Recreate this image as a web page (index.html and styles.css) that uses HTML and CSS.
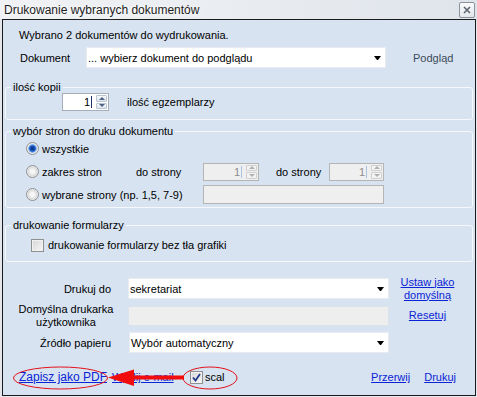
FILE: index.html
```html
<!DOCTYPE html>
<html lang="pl">
<head>
    <meta charset="UTF-8">
    <title>Drukowanie wybranych dokumentów</title>
    <link rel="stylesheet" href="styles.css">
</head>
<body>
    <div class="titlebar">
        <span class="title">Drukowanie wybranych dokumentów</span>
        <span class="close-btn">
            <svg width="8" height="8" viewBox="0 0 8 8"><path d="M1 1 L7 7 M7 1 L1 7" stroke="#5d6670" stroke-width="1.6"/></svg>
        </span>
    </div>

    <div class="window">
        <div class="intro">Wybrano 2 dokumentów do wydrukowania.</div>

        <div class="doc-row">
            <span class="doc-label">Dokument</span>
            <div class="select doc-select"><span>... wybierz dokument do podglądu</span><span class="arrow"></span></div>
            <span class="preview">Podgląd</span>
        </div>

        <!-- ilość kopii -->
        <fieldset class="group copies">
            <legend>ilość kopii</legend>
            <div class="copies-row">
                <div class="spin copies-spin">
                    <span class="spin-val">1</span><span class="caret"></span>
                    <span class="spin-btns"><span class="up"></span><span class="down"></span></span>
                </div>
                <span class="copies-label">ilość egzemplarzy</span>
            </div>
        </fieldset>

        <!-- zakres stron -->
        <fieldset class="group pages-group">
            <legend>wybór stron do druku dokumentu</legend>
            <div class="pages">
                <label class="option all-option"><span class="radio on"></span>wszystkie</label>

                <label class="option"><span class="radio"></span>zakres stron</label>
                <span>do strony</span>
                <div class="spin off">
                    <span class="spin-val">1</span><span class="caret"></span>
                    <span class="spin-btns"><span class="up"></span><span class="down"></span></span>
                </div>
                <span class="to-label">do strony</span>
                <div class="spin off">
                    <span class="spin-val">1</span><span class="caret"></span>
                    <span class="spin-btns"><span class="up"></span><span class="down"></span></span>
                </div>

                <label class="option pick-option"><span class="radio"></span>wybrane strony (np. 1,5, 7-9)</label>
                <div class="textbox off pick-input"></div>
            </div>
        </fieldset>

        <!-- formularze -->
        <fieldset class="group forms-group">
            <legend>drukowanie formularzy</legend>
            <label class="forms"><span class="check"></span>drukowanie formularzy bez tła grafiki</label>
        </fieldset>

        <!-- drukarka -->
        <div class="printer">
            <span class="label">Drukuj do</span>
            <div class="select"><span>sekretariat</span><span class="arrow"></span></div>
            <a href="#" class="link-cell">Ustaw jako<br>domyślną</a>

            <span class="label two-line">Domyślna drukarka<br>użytkownika</span>
            <div class="textbox default-box"></div>
            <a href="#" class="link-cell">Resetuj</a>

            <span class="label">Źródło papieru</span>
            <div class="select paper-select"><span>Wybór automatyczny</span><span class="arrow"></span></div>
        </div>

        <div class="actions">
            <a href="#" class="pdf">Zapisz jako PDF</a>
            <a href="#" class="mail">Wyślij e-mail</a>
            <span class="check on">
                <svg width="9" height="9" viewBox="0 0 9 9"><path d="M1 4.5 L3.5 7.5 L8 1" fill="none" stroke="#1f3a8a" stroke-width="1.8"/></svg>
            </span>
            <span class="scal">scal</span>
            <a href="#" class="abort">Przerwij</a>
            <a href="#" class="print">Drukuj</a>
        </div>
    </div>

    <!-- czerwone oznaczenia -->
    <svg class="marks" width="477" height="397" viewBox="0 0 477 397">
        <ellipse cx="60.5" cy="378" rx="47" ry="11" fill="none" stroke="#e3121b" stroke-width="1"/>
        <ellipse cx="210" cy="378" rx="27" ry="11" fill="none" stroke="#e3121b" stroke-width="1"/>
        <rect x="130" y="375.5" width="54" height="4" fill="#f20d0d"/>
        <polygon points="108,377.5 134,369.5 134,386" fill="#f20d0d"/>
    </svg>
</body>
</html>
```

FILE: styles.css
```css
* {
    box-sizing: border-box;
}
body {
    margin: 0;
    width: 477px;
    height: 397px;
    overflow: hidden;
    position: relative;
    background: #e3e7ec;
    font-family: "Liberation Sans", Arial, sans-serif;
    font-size: 11px;
    color: #000;
}

.titlebar {
    height: 19px;
    display: flex;
    align-items: center;
    justify-content: space-between;
    padding: 0 2px 0 4px;
    background: linear-gradient(to right, #f0f2f5 0%, #eaedf1 45%, #dfe4ea 100%);
}
.title {
    font-size: 12px;
    color: #1c1c1c;
    text-shadow: 0 0 6px #fff, 0 0 3px #fff;
}
.close-btn {
    width: 16px;
    height: 16px;
    border: 1px solid #8a929c;
    border-radius: 2px;
    background: linear-gradient(#fbfbfc, #e2e6ea);
    display: flex;
    align-items: center;
    justify-content: center;
}

.window {
    margin: 0 1px 0 2px;
    height: 377px;
    border: 1px solid #1b1b1b;
    background: #d7e3f0;
}

.intro {
    margin: 9px 0 0 16px;
    line-height: 13px;
}

.doc-row {
    display: flex;
    align-items: center;
    height: 21px;
    margin-top: 5px;
    padding-left: 17px;
}
.doc-label {
    width: 66px;
}
.preview {
    margin-left: 27px;
    color: #3c4a5a;
}

.select {
    display: flex;
    align-items: center;
    justify-content: space-between;
    height: 21px;
    padding: 0 4px 0 1px;
    background: #fff;
    border: 1px solid #e6ecf2;
}
.doc-select {
    width: 300px;
}
.arrow {
    width: 1px;
    height: 0;
    border-left: 3px solid transparent;
    border-right: 3px solid transparent;
    border-top: 4px solid #000;
    box-sizing: content-box;
}

/* group boxes */
.group {
    margin: 13px 2px 0;
    padding: 0;
    border: 1px solid #f6f9fc;
    border-radius: 3px;
    min-width: 0;
}
.group legend {
    margin-left: 5px;
    padding: 0 2px;
    line-height: 12px;
}
.pages-group {
    margin-top: 5px;
}
.forms-group {
    margin-top: 11px;
}

/* spinner */
.spin {
    display: flex;
    height: 18px;
    border: 1px solid #a6afb9;
    background: #fff;
}
.copies-spin {
    width: 47px;
}
.spin-val {
    flex: 1;
    text-align: right;
    line-height: 16px;
}
.caret {
    width: 1px;
    margin: 2px 4px 2px 1px;
    background: #27306e;
}
.spin-btns {
    width: 12px;
    display: flex;
    flex-direction: column;
    gap: 1px;
    padding: 1px 1px 1px 0;
}
.spin-btns span {
    flex: 1;
    display: flex;
    align-items: center;
    justify-content: center;
    border: 1px solid #b9c5d3;
    border-radius: 1px;
    background: linear-gradient(#f7f9fb, #dde5ee);
}
.spin-btns .up::after,
.spin-btns .down::after {
    content: "";
    border-left: 3px solid transparent;
    border-right: 3px solid transparent;
}
.spin-btns .up::after {
    border-bottom: 3px solid #4f6283;
}
.spin-btns .down::after {
    border-top: 3px solid #4f6283;
}
.spin.off {
    background: #efefef;
    border-color: #b5b5b5;
    color: #8d8d8d;
}
.spin.off .caret {
    background: #a9c3e0;
}
.spin.off .spin-btns span {
    border-color: #d0d0d0;
    background: #f3f3f3;
}
.spin.off .up::after {
    border-bottom-color: #b0b0b0;
}
.spin.off .down::after {
    border-top-color: #b0b0b0;
}

.copies-row {
    display: flex;
    align-items: center;
    padding: 0 0 8px 56px;
}
.copies-label {
    margin-left: 18px;
}

/* page range */
.pages {
    display: grid;
    grid-template-columns: 110px 67px 56px 70px 55px;
    grid-auto-rows: 23px;
    align-items: center;
    padding: 0 0 1px 20px;
}
.option {
    display: flex;
    align-items: center;
    gap: 3px;
}
.all-option {
    grid-column: 1 / -1;
}
.pick-option {
    grid-column: 1 / 3;
}
.pick-input {
    grid-column: 3 / 6;
    height: 19px;
}
.to-label {
    padding-left: 17px;
}

.radio {
    flex: none;
    width: 13px;
    height: 13px;
    border-radius: 50%;
    border: 1px solid #8d8f91;
    background: radial-gradient(circle, #f6f6f6 0 2px, #dadada 4.5px, #f4f4f4 5.5px);
}
.radio.on {
    background: radial-gradient(circle, #0d3b94 0 1.5px, #2f6fd4 3px, #8ab6ee 4px, #e4e4e4 4.6px, #f6f6f6 5.5px);
}

.textbox {
    background: #fff;
    border: 1px solid #a6afb9;
}
.textbox.off {
    background: #efefef;
    border-color: #b5b5b5;
}

/* checkboxes */
.check {
    flex: none;
    width: 13px;
    height: 13px;
    display: flex;
    align-items: center;
    justify-content: center;
    border: 1px solid #8e8f91;
    background: linear-gradient(135deg, #d6d6d6, #f7f7f7);
    box-shadow: inset 0 0 0 1px #f1f1f1;
}
.forms {
    display: flex;
    align-items: center;
    gap: 4px;
    padding: 8px 0 9px 25px;
    line-height: 13px;
}

/* printer */
.printer {
    display: grid;
    grid-template-columns: 110px 261px 77px;
    grid-template-rows: 21px 27px 21px;
    row-gap: 3px;
    align-items: center;
    margin-top: 16px;
    padding-left: 15px;
}
.label {
    padding-right: 17px;
    text-align: right;
}
.label.two-line {
    padding-right: 14px;
    text-align: center;
    line-height: 13px;
}
.default-box {
    height: 20px;
    background: #eeeeee;
    border-color: #dde3ea;
}
.paper-select {
    margin-left: 1px;
}
.link-cell {
    text-align: center;
    line-height: 13px;
}

a {
    color: #0b24d6;
    text-decoration: underline;
}

/* bottom row */
.actions {
    display: flex;
    align-items: center;
    margin-top: 18px;
    padding: 0 19px 0 16px;
    line-height: 13px;
}
.pdf {
    width: 93px;
    font-size: 12px;
}
.mail {
    width: 78px;
}
.scal {
    margin-left: 2px;
}
.abort {
    margin-left: auto;
}
.print {
    margin-left: 14px;
}

.marks {
    position: absolute;
    left: 0;
    top: 0;
    pointer-events: none;
}
```
